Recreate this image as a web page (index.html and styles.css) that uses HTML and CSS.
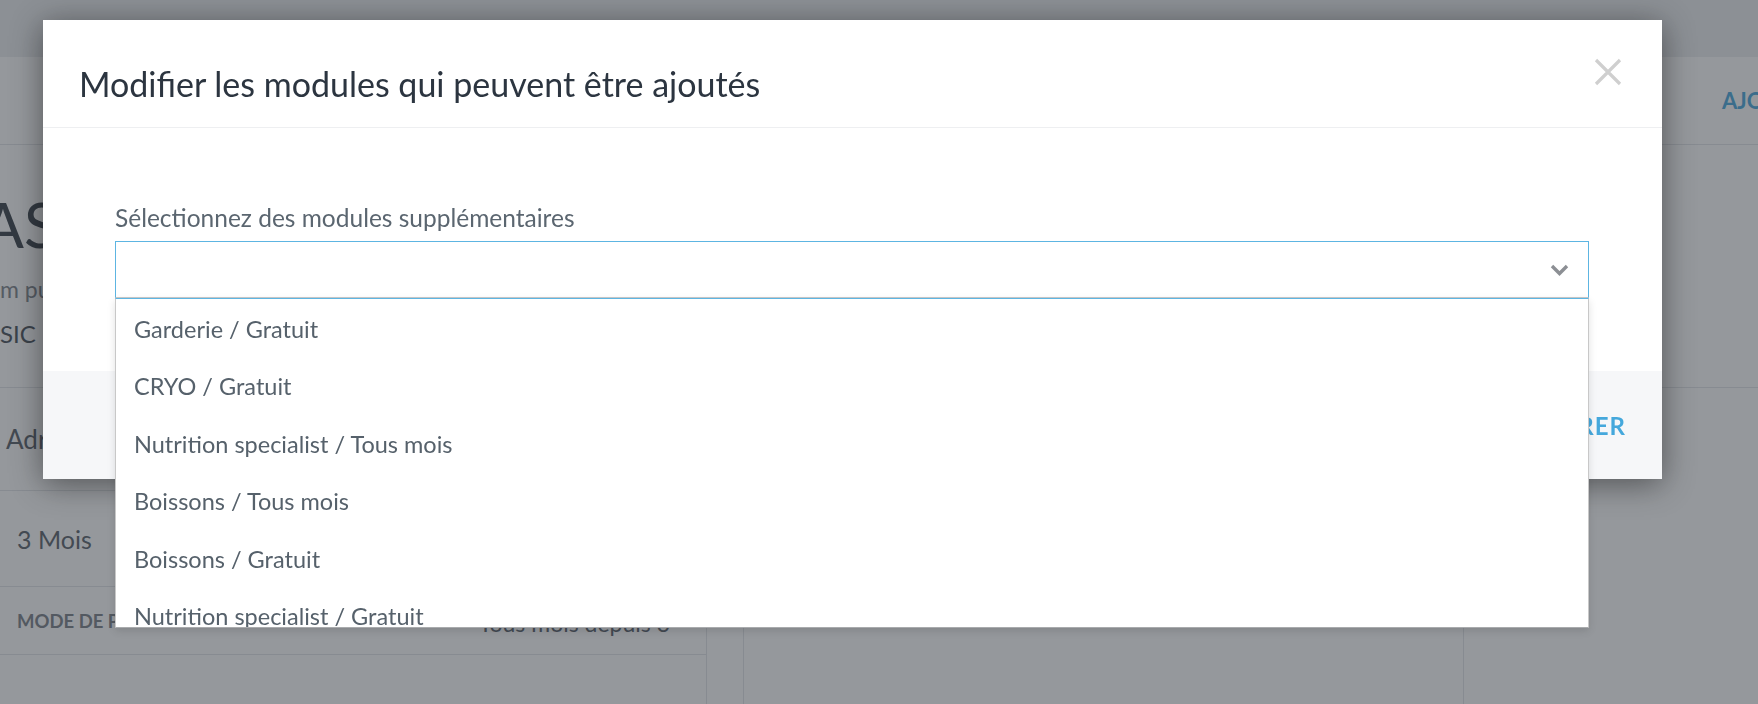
FILE: index.html
```html
<!DOCTYPE html>
<html lang="fr">
<head>
    <meta charset="UTF-8">
    <meta name="viewport" content="width=device-width, initial-scale=1.0">
    <title>Modules</title>
    <link rel="stylesheet" href="styles.css">
</head>
<body>
    <div class="page">
        <div class="topbar"></div>
        <div class="subbar">
            <span></span>
            <span class="subbar-link">AJOUTER UN MODULE</span>
        </div>
        <div class="hero">
            <h1 class="hero-title">ASIC</h1>
            <p class="hero-sub">m pu</p>
            <p class="hero-tag">SIC</p>
        </div>
        <div class="cards">
            <div class="card card-left">
                <div class="row row-first">Adresse</div>
                <div class="row row-second">3 Mois</div>
                <div class="row row-third">
                    <span class="row-label">MODE DE PAIEMENT</span>
                    <span class="row-value">Tous mois depuis 3</span>
                </div>
            </div>
            <div class="card card-mid"></div>
        </div>
    </div>

    <div class="backdrop"></div>

    <div class="modal">
        <div class="modal-header">
            <h2 class="modal-title">Modifier les modules qui peuvent être ajoutés</h2>
            <button class="modal-close" aria-label="Fermer">
                <svg width="28" height="28" viewBox="0 0 28 28">
                    <path d="M2 2 L26 26 M26 2 L2 26" stroke="#cfcfcf" stroke-width="3.2" fill="none"/>
                </svg>
            </button>
        </div>
        <div class="modal-body">
            <label class="field-label">Sélectionnez des modules supplémentaires</label>
            <div class="select">
                <div class="select-box">
                    <svg class="select-arrow" width="19" height="12" viewBox="0 0 19 12">
                        <path d="M2 2 L9.5 9.5 L17 2" stroke="#8c8f94" stroke-width="3.4" fill="none"/>
                    </svg>
                </div>
                <ul class="select-menu">
                    <li>Garderie / Gratuit</li>
                    <li>CRYO / Gratuit</li>
                    <li>Nutrition specialist / Tous mois</li>
                    <li>Boissons / Tous mois</li>
                    <li>Boissons / Gratuit</li>
                    <li>Nutrition specialist / Gratuit</li>
                    <li>Garderie / Tous mois</li>
                </ul>
            </div>
        </div>
        <div class="modal-footer">
            <button class="btn-save">ENREGISTRER</button>
        </div>
    </div>
</body>
</html>
```

FILE: styles.css
```css
html, body {
    margin: 0;
    padding: 0;
    height: 100%;
    overflow: hidden;
    background-color: #fff;
    font-family: Lato, "Open Sans", sans-serif;
}

/* page behind the dialog */
.page {
    color: #5a626b;
}
.topbar {
    height: 57px;
    background-color: #eceef0;
}
.subbar {
    height: 87px;
    display: grid;
    grid-template-columns: 1fr 36px;
    align-items: center;
    border-bottom: 1px solid #e3e5e8;
}
.subbar-link {
    white-space: nowrap;
    font-size: 22px;
    font-weight: 700;
    color: #4aa8dd;
}
.hero {
    height: 242px;
    box-sizing: border-box;
    padding-top: 48px;
}
.hero-title {
    margin: 0 0 0 -18px;
    font-size: 62px;
    line-height: 62px;
    font-weight: 400;
    color: #3a424b;
}
.hero-sub {
    margin: 20px 0 0 0;
    font-size: 23px;
    color: #80868d;
}
.hero-tag {
    margin: 16px 0 0 0;
    font-size: 24px;
    color: #4a525b;
}
.cards {
    display: flex;
    border-top: 1px solid #e3e5e8;
    height: 317px;
}
.card-left {
    width: 707px;
    box-sizing: border-box;
    border-right: 1px solid #e3e5e8;
}
.card-mid {
    width: 721px;
    margin-left: 36px;
    box-sizing: border-box;
    border-left: 1px solid #e3e5e8;
    border-right: 1px solid #e3e5e8;
}
.row {
    box-sizing: border-box;
    display: flex;
    justify-content: space-between;
    align-items: center;
    border-bottom: 1px solid #e3e5e8;
}
.row-first {
    height: 103px;
    padding-left: 6px;
    font-size: 26px;
}
.row-second {
    height: 96px;
    padding-left: 17px;
    font-size: 25px;
}
.row-third {
    height: 68px;
    padding: 0 36px 0 17px;
}
.row-label {
    font-size: 18.5px;
    font-weight: 700;
    color: #7a8188;
}
.row-value {
    padding-top: 5px;
    font-size: 23px;
}

.backdrop {
    position: fixed;
    top: 0;
    left: 0;
    width: 100%;
    height: 100%;
    background-color: rgba(43, 49, 58, 0.5);
}

/* dialog */
.modal {
    position: fixed;
    top: 20px;
    left: 43px;
    width: 1619px;
    background-color: #fff;
    box-shadow: 0 5px 30px rgba(0, 0, 0, 0.45);
}
.modal-header {
    position: relative;
    height: 108px;
    box-sizing: border-box;
    padding: 44px 36px 0 36px;
    border-bottom: 1px solid #eeeff1;
}
.modal-title {
    margin: 0;
    font-size: 34px;
    line-height: 40px;
    font-weight: 400;
    color: #2c3540;
}
.modal-close {
    position: absolute;
    top: 38px;
    right: 40px;
    width: 28px;
    height: 28px;
    padding: 0;
    border: none;
    background: none;
}
.modal-close svg {
    display: block;
}
.modal-body {
    height: 243px;
    box-sizing: border-box;
    padding: 75px 73px 0 72px;
}
.field-label {
    display: block;
    font-size: 24.5px;
    line-height: 30px;
    color: #5b6670;
}
.select {
    position: relative;
    margin-top: 8px;
}
.select-box {
    height: 57px;
    box-sizing: border-box;
    border: 1px solid #5db5e2;
    border-bottom-color: #cacaca;
    display: flex;
    justify-content: flex-end;
    align-items: center;
    padding-right: 19px;
}
.select-menu {
    position: absolute;
    top: 100%;
    left: 0;
    right: 0;
    height: 330px;
    box-sizing: border-box;
    margin: 0;
    padding: 2px 0 0 0;
    list-style: none;
    overflow: hidden;
    background-color: #fff;
    border: 1px solid #c8c8c8;
    border-top-color: #5db5e2;
    border-bottom-color: #a9abad;
    box-shadow: 0 3px 8px rgba(0, 0, 0, 0.12);
    z-index: 2;
}
.select-menu li {
    padding: 0 18px;
    line-height: 57.4px;
    font-size: 23.5px;
    color: #56616b;
}
.modal-footer {
    height: 108px;
    box-sizing: border-box;
    display: flex;
    justify-content: flex-end;
    align-items: center;
    padding-right: 36px;
    background-color: #f6f7f9;
}
.btn-save {
    padding: 0;
    border: none;
    background: none;
    font-family: Lato, "Open Sans", sans-serif;
    font-size: 24px;
    font-weight: 700;
    letter-spacing: 1px;
    color: #45a8dc;
}
```
